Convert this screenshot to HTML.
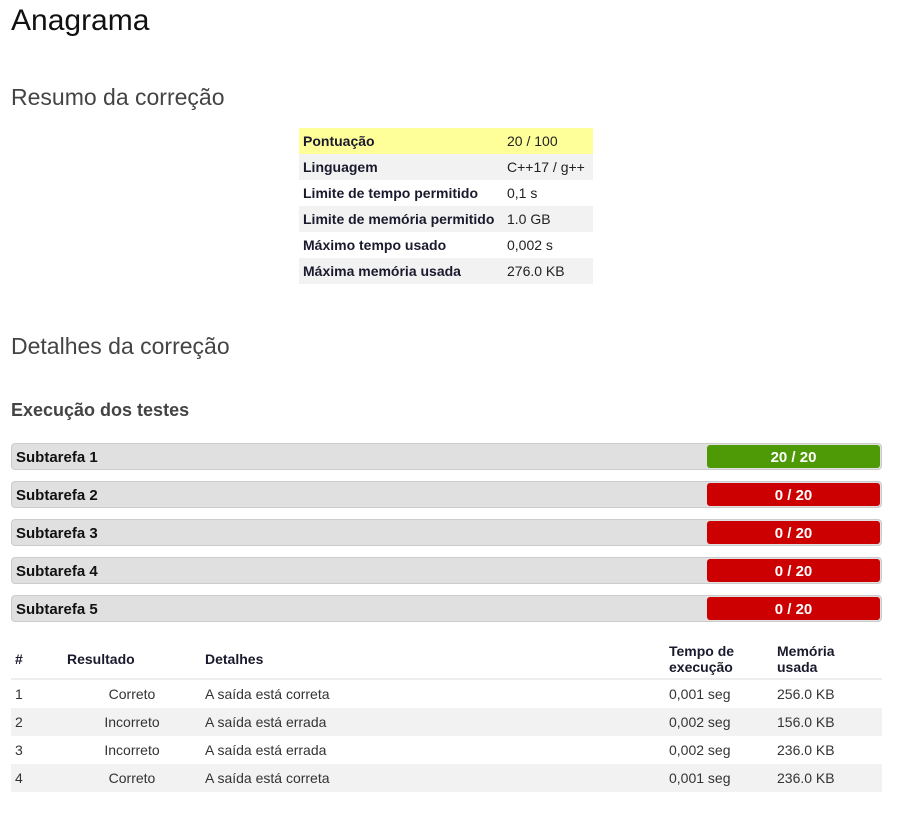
<!DOCTYPE html>
<html><head><meta charset="utf-8"><style>
body{margin:0;background:#fff;font-family:"Liberation Sans",sans-serif;color:#222;width:913px;height:817px;position:relative;overflow:hidden}
.a{position:absolute;white-space:nowrap}
h1{position:absolute;left:11px;top:4px;margin:0;font-weight:normal;font-size:30px;color:#111}
.h2{position:absolute;left:11px;margin:0;font-weight:normal;font-size:23px;color:#444}
.sum{position:absolute;left:299px;top:128px;width:294px;border-collapse:collapse;font-size:14px}
.sum td{height:26px;padding:0 0 0 4px;color:#222}
.sum td:first-child{font-weight:bold;width:200px;color:#1a1a2e}
.sum tr:nth-child(even){background:#f2f2f2}
.bar{position:absolute;left:11px;width:869px;height:25px;background:#e0e0e0;border:1px solid #ccc;border-radius:4px;box-sizing:content-box}
.bar span{position:absolute;left:4px;top:5px;font-weight:bold;font-size:15px;color:#111}
.bar b{position:absolute;right:1px;top:1px;width:173px;height:23px;border-radius:3px;color:#fff;font-size:15px;text-align:center;line-height:25px}
.g{background:#4e9a06}.r{background:#cc0000}
.t{position:absolute;left:11px;top:640px;width:871px;border-collapse:collapse;font-size:14px}
.t th{text-align:left;font-weight:bold;height:38px;line-height:16px;padding:0 4px;vertical-align:middle;color:#1a1a2e;border-bottom:2px solid #eee}
.t td{height:28px;padding:0 4px;color:#333}
.t tbody tr:nth-child(odd) td{background:#fff}
.t tbody tr:nth-child(even) td{background:#f2f2f2}
</style></head><body>
<h1>Anagrama</h1>
<div class="h2" style="top:84px">Resumo da correção</div>
<table class="sum">
<tr style="background:#ffff99"><td>Pontuação</td><td>20 / 100</td></tr>
<tr><td>Linguagem</td><td>C++17 / g++</td></tr>
<tr><td>Limite de tempo permitido</td><td>0,1 s</td></tr>
<tr><td>Limite de memória permitido</td><td>1.0 GB</td></tr>
<tr><td>Máximo tempo usado</td><td>0,002 s</td></tr>
<tr><td>Máxima memória usada</td><td>276.0 KB</td></tr>
</table>
<div class="h2" style="top:333px">Detalhes da correção</div>
<div class="a" style="left:11px;top:400px;font-size:18px;font-weight:bold;color:#444">Execução dos testes</div>
<div class="bar" style="top:443px"><span>Subtarefa 1</span><b class="g">20 / 20</b></div>
<div class="bar" style="top:481px"><span>Subtarefa 2</span><b class="r">0 / 20</b></div>
<div class="bar" style="top:519px"><span>Subtarefa 3</span><b class="r">0 / 20</b></div>
<div class="bar" style="top:557px"><span>Subtarefa 4</span><b class="r">0 / 20</b></div>
<div class="bar" style="top:595px"><span>Subtarefa 5</span><b class="r">0 / 20</b></div>
<table class="t">
<thead><tr><th style="width:44px">#</th><th style="width:130px">Resultado</th><th style="width:456px">Detalhes</th><th style="width:100px">Tempo de<br>execução</th><th>Memória<br>usada</th></tr></thead>
<tbody>
<tr><td>1</td><td style="text-align:center">Correto</td><td>A saída está correta</td><td>0,001 seg</td><td>256.0 KB</td></tr>
<tr><td>2</td><td style="text-align:center">Incorreto</td><td>A saída está errada</td><td>0,002 seg</td><td>156.0 KB</td></tr>
<tr><td>3</td><td style="text-align:center">Incorreto</td><td>A saída está errada</td><td>0,002 seg</td><td>236.0 KB</td></tr>
<tr><td>4</td><td style="text-align:center">Correto</td><td>A saída está correta</td><td>0,001 seg</td><td>236.0 KB</td></tr>
</tbody></table>
</body></html>
